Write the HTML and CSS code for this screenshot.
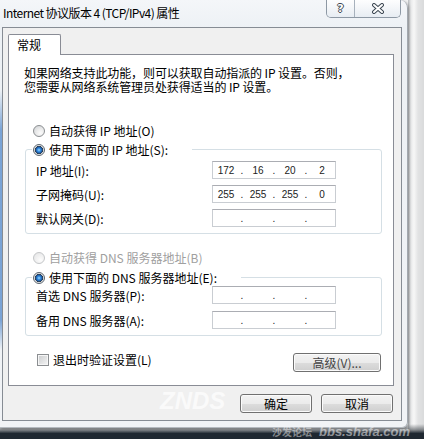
FILE: index.html
```html
<!DOCTYPE html>
<html lang="zh-CN">
<head>
<meta charset="utf-8">
<title>Internet 协议版本 4 (TCP/IPv4) 属性</title>
<link rel="stylesheet" href="styles.css">
</head>
<body>
<div class="screen">
  <div class="desk">
    <div class="window">
      <div class="titlebar">
        <div class="title">Internet 协议版本 4 (TCP/IPv4) 属性</div>
        <div class="caption-btns">
          <div class="cbtn help"><span>?</span></div>
          <div class="cbtn close">
            <svg width="14" height="11" viewBox="0 0 14 11">
              <path d="M3 2 L11 9 M11 2 L3 9" stroke="#3c4752" stroke-width="4" stroke-linecap="round" fill="none"/>
              <path d="M3 2 L11 9 M11 2 L3 9" stroke="#ffffff" stroke-width="2" stroke-linecap="round" fill="none"/>
            </svg>
          </div>
        </div>
      </div>
      <div class="client">
        <div class="tabs"><div class="tab">常规</div></div>
        <div class="panel">
          <p class="desc">如果网络支持此功能，则可以获取自动指派的 IP 设置。否则，<br>您需要从网络系统管理员处获得适当的 IP 设置。</p>
          <div class="opt first"><span class="radio"></span>自动获得 IP 地址(O)</div>
          <fieldset class="group g-ip">
            <legend class="opt"><span class="radio on"></span>使用下面的 IP 地址(S):</legend>
            <div class="row"><span class="lbl">IP 地址(I):</span><div class="ipbox"><span>172</span><i>.</i><span>16</span><i>.</i><span>20</span><i>.</i><span>2</span></div></div>
            <div class="row"><span class="lbl">子网掩码(U):</span><div class="ipbox"><span>255</span><i>.</i><span>255</span><i>.</i><span>255</span><i>.</i><span>0</span></div></div>
            <div class="row"><span class="lbl">默认网关(D):</span><div class="ipbox"><span></span><i>.</i><span></span><i>.</i><span></span><i>.</i><span></span></div></div>
          </fieldset>
          <div class="opt dis"><span class="radio off"></span>自动获得 DNS 服务器地址(B)</div>
          <fieldset class="group g-dns">
            <legend class="opt"><span class="radio on"></span>使用下面的 DNS 服务器地址(E):</legend>
            <div class="row"><span class="lbl">首选 DNS 服务器(P):</span><div class="ipbox"><span></span><i>.</i><span></span><i>.</i><span></span><i>.</i><span></span></div></div>
            <div class="row"><span class="lbl">备用 DNS 服务器(A):</span><div class="ipbox"><span></span><i>.</i><span></span><i>.</i><span></span><i>.</i><span></span></div></div>
          </fieldset>
          <div class="bottom-row">
            <div class="opt"><span class="check"></span>退出时验证设置(L)</div>
            <button class="btn adv">高级(V)...</button>
          </div>
        </div>
        <div class="actions">
          <button class="btn act">确定</button>
          <button class="btn act">取消</button>
        </div>
      </div>
    </div>
  </div>
  <div class="wm wm-znds">ZNDS</div>
  <div class="wm wm-sf">沙发论坛</div>
  <div class="wm wm-url">bbs.shafa.com</div>
</div>
</body>
</html>
```

FILE: styles.css
```css
body {
  margin: 0;
}

.screen {
  position: relative;
  width: 424px;
  height: 439px;
  overflow: hidden;
  background: #1f2831;
  font-family: "Noto Sans CJK SC", sans-serif;
  font-size: 12px;
  color: #000;
}

.desk {
  height: 433px;
  display: flex;
  background:
    linear-gradient(to bottom, rgba(0,0,0,0) 424px, rgba(60,66,72,0.6) 430px, #2a333c 433px),
    linear-gradient(to right, #f2f3f4 0, #f2f3f4 408px, #b9bcbf 408px, #e9eaeb 411px, #f7f7f7 414px, #e2e3e4 418px, #d9dadb 424px);
}

.window {
  width: 408px;
  height: 428px;
  box-sizing: border-box;
  display: flex;
  flex-direction: column;
  border-right: 1px solid #a3a9b0;
  border-bottom: 1px solid #b4b9bf;
  border-radius: 0 8px 6px 0;
  background:
    linear-gradient(to bottom, rgba(120,160,210,0) 90px, rgba(110,155,210,0.9) 130px, rgba(110,155,210,0.9) 320px, rgba(120,160,210,0) 350px) left top / 2px 100% no-repeat,
    linear-gradient(to bottom, #f4f6f9 0, #edf1f5 28px, #f1f3f6 100%);
  box-shadow: 1px 1px 3px rgba(0,0,0,0.3);
}

.titlebar {
  height: 27px;
  display: flex;
  align-items: flex-start;
}

.title {
  padding-left: 3px;
  line-height: 26px;
  letter-spacing: -0.55px;
  white-space: nowrap;
}

.caption-btns {
  margin-left: auto;
  margin-right: 6px;
  display: flex;
  height: 17px;
  border: 1px solid #8d98a4;
  border-top: 0;
  border-radius: 0 0 5px 5px;
  overflow: hidden;
}

.cbtn {
  height: 17px;
  display: flex;
  align-items: center;
  justify-content: center;
  background: linear-gradient(to bottom, rgba(255,255,255,0.85), rgba(228,234,241,0.7));
}

.help {
  width: 27px;
  border-right: 1px solid #a7b1bc;
}

.help span {
  font-family: "DejaVu Sans", sans-serif;
  font-weight: bold;
  font-size: 11px;
  line-height: 11px;
  color: #fff;
  text-shadow: 1px 0 #3c4752, -1px 0 #3c4752, 0 1px #3c4752, 0 -1px #3c4752;
}

.close {
  width: 45px;
}

.client {
  height: 394px;
  margin: 0 5px 0 2px;
  box-sizing: border-box;
  border: 1px solid #868c94;
  background: #f0f0f0;
  padding: 6px 7px 0 5px;
}

.tabs {
  display: flex;
  position: relative;
  z-index: 1;
  margin-bottom: -1px;
}

.tab {
  width: 53px;
  height: 21px;
  box-sizing: border-box;
  border: 1px solid #898c95;
  border-bottom: 0;
  border-radius: 2px 2px 0 0;
  background: #fff;
  padding-left: 8px;
  line-height: 19px;
}

.panel {
  height: 332px;
  box-sizing: border-box;
  border: 1px solid #898c95;
  background: #fff;
  padding: 11px 11px 0 16px;
}

.desc {
  margin: 0 0 0 -1px;
  line-height: 14px;
  letter-spacing: -0.1px;
  white-space: nowrap;
}

.opt {
  display: flex;
  align-items: center;
  gap: 4px;
  height: 13px;
  line-height: 13px;
  white-space: nowrap;
}

.opt.first {
  margin: 30px 0 0 8px;
}

.opt.dis {
  margin: 17px 0 0 8px;
  color: #a0a0a0;
}

.radio {
  flex: none;
  width: 12px;
  height: 12px;
  box-sizing: border-box;
  border-radius: 50%;
  border: 1px solid #8b8e91;
  background: radial-gradient(circle at 65% 70%, #fbfbfb 0, #eeeeee 35%, #cdd0d3 100%);
}

.radio.on {
  border-color: #5b646d;
  background: radial-gradient(circle at 50% 50%, #9fdcff 0, #3d93e4 1.5px, #1a5aa6 3px, #2c3a48 3.8px, #d2d5d8 4.3px, #f3f3f3 5px);
}

.radio.off {
  border-color: #c4c6c8;
  background: radial-gradient(circle at 65% 70%, #fdfdfd 0, #f2f2f2 40%, #e2e3e4 100%);
}

.check {
  flex: none;
  width: 12px;
  height: 12px;
  box-sizing: border-box;
  border: 1px solid #8b8e91;
  background: linear-gradient(135deg, #c9cbcd, #f6f6f6);
  box-shadow: inset 0 0 0 1px #f6f6f6;
}

.group {
  margin: 6px 0 0 0;
  padding: 0 0 6px 0;
  min-width: 0;
  border: 1px solid #d5dfe5;
  border-radius: 3px;
}

.group legend {
  margin-left: 6px;
  padding: 0 24px 0 1px;
}

.g-dns {
  margin-top: 7px;
}

.row {
  display: flex;
  align-items: center;
  height: 18px;
  padding-left: 10px;
  margin-top: 6px;
}

.g-ip .row:first-of-type {
  margin-top: 5px;
}

.g-dns .row {
  margin-top: 7px;
}

.g-dns .row:first-of-type {
  margin-top: 2px;
}

.lbl {
  width: 176px;
  white-space: nowrap;
}

.ipbox {
  width: 124px;
  height: 18px;
  box-sizing: border-box;
  display: flex;
  align-items: center;
  padding-left: 1px;
  border: 1px solid #c9cdd2;
  border-top-color: #abadb3;
  background: #fff;
  font-family: "Liberation Sans", sans-serif;
  font-size: 10px;
  color: #222;
}

.ipbox span {
  width: 24px;
  text-align: center;
}

.ipbox i {
  width: 8px;
  text-align: center;
  font-style: normal;
}

.bottom-row {
  display: flex;
  justify-content: space-between;
  align-items: flex-start;
  margin-top: 17px;
  padding-left: 12px;
}

.btn {
  box-sizing: border-box;
  margin: 0;
  padding: 0;
  border: 1px solid #707070;
  border-radius: 3px;
  background: linear-gradient(to bottom, #f3f3f3 0, #ebebeb 50%, #dddddd 50%, #cfcfcf 100%);
  box-shadow: inset 0 0 0 1px #fbfbfb;
  font-family: "Noto Sans CJK SC", sans-serif;
  font-size: 12px;
  color: #000;
  line-height: 17px;
}

.adv {
  width: 88px;
  height: 19px;
  margin-right: 1px;
  color: #444;
}

.actions {
  display: flex;
  justify-content: flex-end;
  gap: 9px;
  margin-top: 8px;
  padding-right: 1px;
}

.act {
  width: 72px;
  height: 19px;
}

.wm {
  position: absolute;
  white-space: nowrap;
  pointer-events: none;
}

.wm-znds {
  left: 160px;
  top: 388px;
  font-family: "Liberation Sans", sans-serif;
  font-weight: bold;
  font-style: italic;
  font-size: 24px;
  line-height: 26px;
  color: rgba(255,255,255,0.7);
}

.wm-sf {
  left: 272px;
  top: 425px;
  font-size: 10px;
  line-height: 13px;
  font-weight: bold;
  color: rgba(255,255,255,0.45);
}

.wm-url {
  left: 319px;
  top: 425px;
  font-family: "Liberation Sans", sans-serif;
  font-weight: bold;
  font-style: italic;
  font-size: 13px;
  line-height: 14px;
  color: rgba(255,255,255,0.5);
}
```
